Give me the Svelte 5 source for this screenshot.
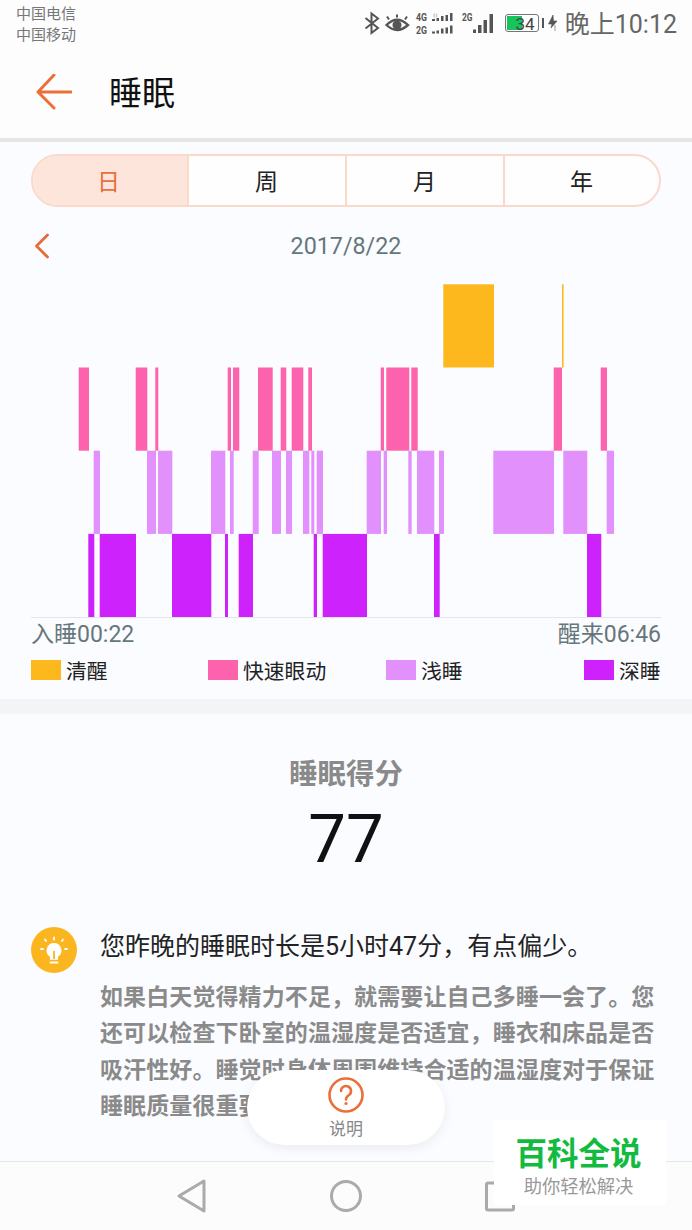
<script>
  const tabs = ['日', '周', '月', '年'];
  const H = 83.2;
  const rows = [
    { color: '#fdb81e', y: 0, bars: [[443.3, 494], [562, 563.6]] },
    { color: '#fd62ad', y: 1, bars: [[78.7, 89], [135.7, 147.3], [155.3, 158.3], [227.7, 231], [233, 239.3], [258, 272.7], [280.7, 286.3], [291.7, 303.3], [308.3, 312], [380.7, 384], [386.3, 409.3], [411.3, 417.7], [553.7, 562], [600.7, 607]] },
    { color: '#e190fc', y: 2, bars: [[93.7, 100], [147, 156], [158, 172.3], [211, 225.3], [230, 233.7], [252.7, 258.7], [272, 281], [286, 292], [303, 309.3], [311.3, 314.3], [316.7, 323], [366.7, 381], [383.7, 387], [408.3, 411.7], [417, 434.3], [439, 444], [493.3, 554], [563.3, 587.3], [606.7, 614]] },
    { color: '#cd22fc', y: 3, bars: [[88.3, 94.3], [99.7, 136], [172, 211.3], [225, 228], [238.7, 253], [313.7, 317], [322.7, 367], [434, 439.7], [587, 601.3]] }
  ];
  const legend = [
    ['清醒', '#fdb81e'],
    ['快速眼动', '#fd62ad'],
    ['浅睡', '#e190fc'],
    ['深睡', '#cd22fc']
  ];
</script>

<div class="page">
  <div class="status">
    <div class="carrier"><span>中国电信</span><span>中国移动</span></div>
    <svg class="sys" width="204" height="50" viewBox="360 0 204 50">
      <path d="M366.500 18 L379 28 L372.500 33 V13.500 L379 18.500 L366.500 28.500" fill="none" stroke="#555" stroke-width="2" />
      <path d="M387.500 25 Q398 14.500 409 25 Q398 35 387.500 25 Z" fill="none" stroke="#555" stroke-width="2.400" />
      <circle cx="398" cy="25" r="4.500" fill="#555" />
      <path d="M390 19.500 L388 16.500 M398 17.500 V14.500 M406 19.500 L408 16.500" stroke="#555" stroke-width="2" />
      <text x="417" y="21" class="net" textLength="11" lengthAdjust="spacingAndGlyphs">4G</text>
      <text x="417" y="33.500" class="net" textLength="11" lengthAdjust="spacingAndGlyphs">2G</text>
      <text x="463" y="21" class="net" textLength="10.500" lengthAdjust="spacingAndGlyphs">2G</text>
      <path d="M435 13.500 v4 M437.500 13.500 v4" stroke="#ccc" stroke-width="1.500" />
      <path d="M433 21 h3 v-2 h-3z M437.500 21 h2.500 v-3 h-2.500z M442 21 h2.500 v-5 h-2.500z M446.500 21 h2.500 v-6 h-2.500z M451 21 h2.500 v-8 h-2.500z" fill="#555" />
      <path d="M433 33.500 h3 v-2 h-3z M437.500 33.500 h2.500 v-3 h-2.500z M442 33.500 h2.500 v-5 h-2.500z M446.500 33.500 h2.500 v-6 h-2.500z M451 33.500 h2.500 v-8 h-2.500z" fill="#555" />
      <path d="M474 33 v-3.500 h3 v3.500z M479 33 v-8 h3.500 v8z M484.500 33 v-13 h3.500 v13z M490.500 33 v-19 h3.500 v19z" fill="#555" />
      <rect x="506.500" y="14.500" width="33" height="17" rx="2.500" fill="#fff" stroke="#777" />
      <path d="M508 16 h15 v14 h-15z" fill="#17c45c" />
      <text x="526" y="29.500" class="batt" text-anchor="middle">34</text>
      <rect x="543" y="18" width="2" height="10" fill="#555" />
      <path d="M554 15 L549.500 24 H553 L552 28 L558 21 H554.500 Z M556 25 V31" fill="#555" stroke="#555" stroke-width="0.600" />
    </svg>
    <div class="time">晚上10:12</div>
  </div>

  <header class="head">
    <svg class="back" width="36" height="36" viewBox="0 0 36 36">
      <path d="M18 1 L2 18 L18 34 M2 18 H35" fill="none" stroke="#ea7038" stroke-width="3" stroke-linecap="round" stroke-linejoin="round" />
    </svg>
    <h1>睡眠</h1>
  </header>
  <div class="rule"></div>

  <section class="top">
    <div class="tabs">
      {#each tabs as t, i}
        <div class="tab" class:on={i === 0}>{t}</div>
      {/each}
    </div>

    <div class="date">
      <svg class="chev" width="16" height="26" viewBox="0 0 16 26">
        <path d="M13.500 2 L2.500 13 L13.500 24" fill="none" stroke="#e56c38" stroke-width="2.800" stroke-linecap="round" stroke-linejoin="round" />
      </svg>
      <span>2017/8/22</span>
    </div>

    <svg class="chart" width="692" height="334" viewBox="0 0 692 334">
      {#each rows as r}
        {#each r.bars as b}
          <rect x={b[0]} y={r.y * H + 0.300} width={b[1] - b[0]} height={H} fill={r.color} />
        {/each}
      {/each}
      <rect x="31" y="333" width="630" height="1" fill="#e4e7ea" />
    </svg>

    <div class="axis"><span>入睡00:22</span><span>醒来06:46</span></div>

    <div class="legend">
      {#each legend as l}
        <div class="item">
          <i style="background:{l[1]}"></i><span>{l[0]}</span>
        </div>
      {/each}
    </div>
  </section>

  <div class="band"></div>

  <section class="score">
    <div class="label">睡眠得分</div>
    <div class="num">77</div>
    <div class="advice">
      <svg class="tip" width="46" height="46" viewBox="0 0 46 46">
        <circle cx="23" cy="23" r="23" fill="#fbb61f" />
        <path d="M23 16 a7.500 7.500 0 0 0 -4 13.800 v3 h8 v-3 A7.500 7.500 0 0 0 23 16 Z" fill="#fff" />
        <path d="M23 24 v8" stroke="#fbb61f" stroke-width="1.800" />
        <path d="M19.500 35.500 h7" stroke="#fff" stroke-width="2" stroke-linecap="round" />
        <path d="M23 10.500 v2 M14 12.500 l1 1.500 M32 12.500 l-1 1.500 M10 22 h2 M34 22 h2" stroke="#fff" stroke-width="1.800" stroke-linecap="round" />
      </svg>
      <div class="copy">
        <p class="lead">您昨晚的睡眠时长是5小时47分，有点偏少。</p>
        <p class="body">如果白天觉得精力不足，就需要让自己多睡一会了。您还可以检查下卧室的温湿度是否适宜，睡衣和床品是否吸汗性好。睡觉时身体周围维持合适的温湿度对于保证睡眠质量很重要。</p>
      </div>
    </div>
  </section>

  <nav class="nav">
    <svg width="692" height="68" viewBox="0 0 692 68">
      <path d="M204 19 L179 34 L204 49 Z" fill="none" stroke="#aaa" stroke-width="3" stroke-linejoin="round" />
      <circle cx="346" cy="34" r="14.500" fill="none" stroke="#aaa" stroke-width="3" />
      <rect x="486.500" y="21" width="27" height="27" rx="1.500" fill="none" stroke="#aaa" stroke-width="3" />
    </svg>
  </nav>

  <div class="pill">
    <svg width="38" height="38" viewBox="0 0 38 38">
      <circle cx="19" cy="19" r="16.500" fill="none" stroke="#ea7038" stroke-width="2.600" />
      <path d="M14 15 a5 5 0 1 1 8 4 q-3 2 -3 4.500" fill="none" stroke="#ea7038" stroke-width="2.600" stroke-linecap="round" />
      <circle cx="19" cy="27.500" r="1.600" fill="#ea7038" />
    </svg>
    <span>说明</span>
  </div>

  <div class="mark">
    <strong>百科全说</strong>
    <span>助你轻松解决</span>
  </div>
</div>

<style>
  :global(body) {
    margin: 0;
    background: #fbfcff;
  }
  .page {
    position: relative;
    width: 692px;
    height: 1230px;
    overflow: hidden;
    display: flex;
    flex-direction: column;
    background: #fbfcff;
    font-family: Roboto, "Noto Sans CJK SC", sans-serif;
  }
  .status {
    height: 50px;
    flex: none;
    display: flex;
    align-items: flex-start;
    background: #fdfdfd;
    padding: 0 15px 0 16px;
    box-sizing: border-box;
  }
  .carrier {
    display: flex;
    flex-direction: column;
    font-size: 15px;
    line-height: 21px;
    color: #777;
    padding-top: 4px;
  }
  .sys {
    margin-left: auto;
    display: block;
  }
  .net {
    font: 700 11px/1 Roboto, sans-serif;
    fill: #555;
  }
  .batt {
    font: 400 17px/1 Roboto, sans-serif;
    fill: #444;
  }
  .time {
    font-size: 25px;
    line-height: 50px;
    color: #666;
    margin-left: 2px;
  }
  .head {
    height: 88px;
    flex: none;
    display: flex;
    align-items: center;
    background: #fdfdfd;
    padding: 0 0 4px 36px;
    box-sizing: border-box;
  }
  .back {
    display: block;
  }
  h1 {
    margin: 2px 0 0 37px;
    font-size: 33px;
    font-weight: 400;
    color: #111;
    line-height: 1;
  }
  .rule {
    height: 4px;
    flex: none;
    background: #e6e6e6;
  }
  .top {
    height: 557px;
    flex: none;
    padding-top: 12px;
    box-sizing: border-box;
  }
  .tabs {
    margin: 0 31px;
    height: 53px;
    box-sizing: border-box;
    display: grid;
    grid-template-columns: 154px 158px 158px 156px;
    border: 2px solid #fad9cb;
    border-radius: 27px;
    overflow: hidden;
    background: #fefefe;
  }
  .tab {
    display: flex;
    align-items: center;
    justify-content: center;
    font-size: 23px;
    color: #222;
    border-left: 2px solid #fad9cb;
    padding: 0 1px 2px 0;
  }
  .tab:first-child {
    border-left: 0;
    padding-right: 3px;
  }
  .tab.on {
    background: #fde5dc;
    color: #e8703a;
  }
  .date {
    position: relative;
    height: 77px;
    display: flex;
    align-items: center;
    justify-content: center;
    font-size: 23.300px;
    color: #66777b;
  }
  .date span {
    margin-top: 1px;
  }
  .chev {
    position: absolute;
    left: 34px;
    top: 26px;
  }
  .chart {
    display: block;
  }
  .axis {
    margin: 0 31px;
    height: 30px;
    display: flex;
    justify-content: space-between;
    align-items: center;
    font-size: 23px;
    color: #66777b;
    padding-bottom: 3px;
    box-sizing: border-box;
  }
  .legend {
    margin: 7px 31px 0;
    display: grid;
    grid-template-columns: 177px 178px 198px 77px;
    align-items: center;
    height: 26px;
  }
  .item {
    display: flex;
    align-items: center;
    gap: 5px;
    font-size: 20.800px;
    color: #222;
  }
  .item i {
    display: block;
    width: 30px;
    height: 20px;
  }
  .band {
    height: 15px;
    flex: none;
    background: #f3f4f6;
  }
  .score {
    flex: 1;
    min-height: 0;
    padding-top: 44px;
    box-sizing: border-box;
  }
  .label {
    text-align: center;
    font-size: 28.500px;
    font-weight: 700;
    color: #8a8a8a;
    line-height: 34px;
  }
  .num {
    text-align: center;
    font-size: 67px;
    font-weight: 400;
    color: #111;
    line-height: 80px;
    margin-top: 7px;
  }
  .advice {
    display: flex;
    margin: 48px 31px 0;
  }
  .tip {
    flex: none;
    display: block;
  }
  .copy {
    margin-left: 23px;
    width: 556px;
  }
  p {
    margin: 0;
  }
  .lead {
    font-size: 25px;
    line-height: 36px;
    color: #222;
    padding-top: 2px;
  }
  .body {
    margin-top: 15px;
    font-size: 23px;
    line-height: 36.400px;
    font-weight: 700;
    color: #8a8a8a;
    letter-spacing: 0.100px;
  }
  .nav {
    height: 69px;
    flex: none;
    border-top: 1px solid #e6e6e8;
    box-sizing: border-box;
    background: #fcfcfd;
  }
  .nav svg {
    display: block;
  }
  .pill {
    position: absolute;
    left: 247px;
    top: 1070px;
    width: 198px;
    height: 75px;
    border-radius: 38px;
    background: #fff;
    box-shadow: 0 3px 12px rgba(0, 0, 0, 0.07);
    display: flex;
    flex-direction: column;
    align-items: center;
    padding-top: 6px;
    box-sizing: border-box;
  }
  .pill svg {
    display: block;
  }
  .pill span {
    font-size: 17px;
    line-height: 22px;
    color: #888;
    margin-top: 4px;
  }
  .mark {
    position: absolute;
    left: 494px;
    top: 1120px;
    width: 172px;
    height: 85px;
    background: #fff;
    display: flex;
    flex-direction: column;
    align-items: center;
    padding: 15px 3px 0 0;
    box-sizing: border-box;
  }
  .mark strong {
    font-size: 31.500px;
    line-height: 40px;
    font-weight: 700;
    color: #12bb3f;
  }
  .mark span {
    font-size: 18.300px;
    line-height: 23px;
    color: #999;
  }
</style>
